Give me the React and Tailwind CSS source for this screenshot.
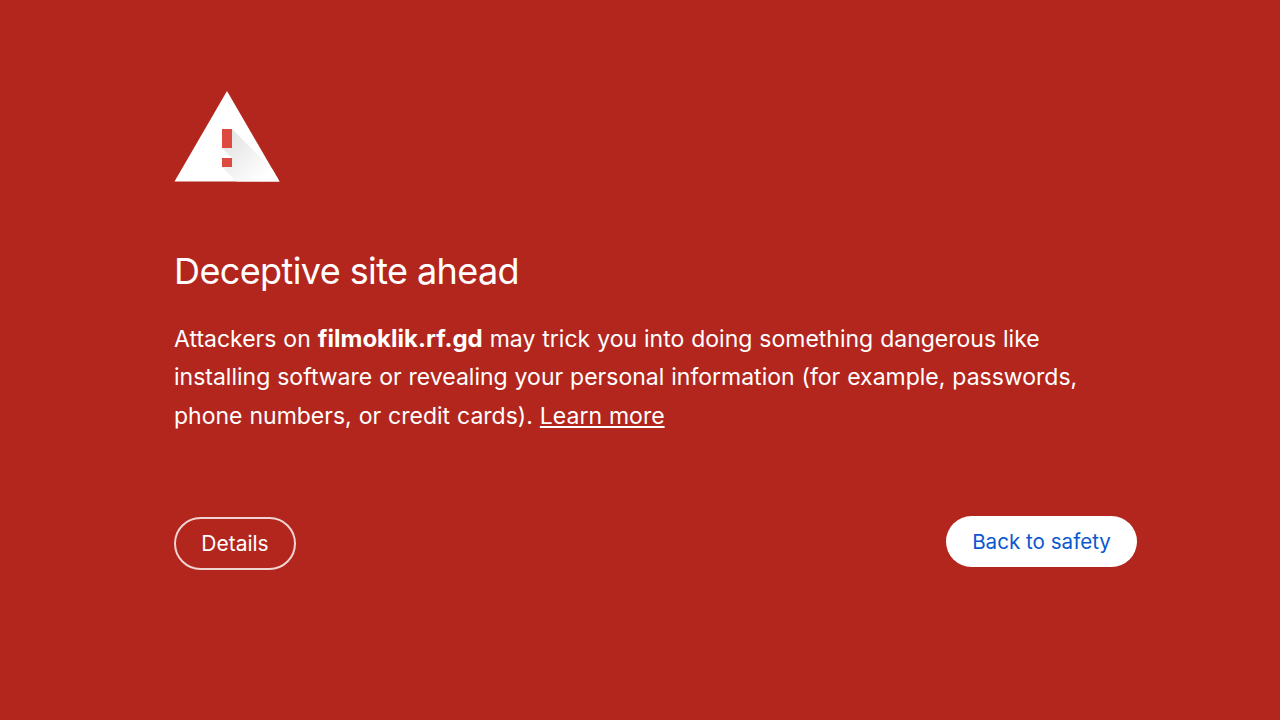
export default function App() {
  return (
    <div className="min-h-screen bg-[#b3261e] text-white font-['Inter',sans-serif] pl-[174px] pt-[90px]">
      <div className="w-[963px]">
        <svg width="106" height="92" viewBox="0 0 106 92" className="block">
          <defs>
            <linearGradient id="shade" gradientUnits="userSpaceOnUse" x1="52" y1="50" x2="90" y2="88">
              <stop offset="0" stopColor="#e4e4e4" />
              <stop offset="1" stopColor="#ffffff" />
            </linearGradient>
          </defs>
          <polygon points="53,1 105.5,91.5 0.5,91.5" fill="#ffffff" />
          <polygon points="58,39 98.6,79.6 105.5,91.5 81.5,91.5 48,58" fill="url(#shade)" />
          <polygon points="48,77 62.5,91.5 81.5,91.5 58,68" fill="url(#shade)" />
          <rect x="48" y="39" width="10" height="19" fill="#dd4b40" />
          <rect x="48" y="68" width="10" height="9" fill="#dd4b40" />
        </svg>
        <h1 className="mt-[64px] text-[36px] leading-[50px] font-normal tracking-[-0.6px]">Deceptive site ahead</h1>
        <p className="mt-[24px] text-[23px] leading-[38.4px] [word-spacing:0.5px]">
          Attackers on <strong className="text-[24px] font-bold">filmoklik.rf.gd</strong> may trick you into doing something dangerous like installing software or revealing your personal information (for example, passwords, phone numbers, or credit cards). <a className="underline">Learn more</a>
        </p>
        <div className="mt-[81px] flex items-start justify-between">
          <button className="mt-px h-[53px] w-[122px] rounded-full border-2 border-white/80 pt-px text-[21px]">Details</button>
          <button className="h-[51px] w-[191px] rounded-full bg-white pt-px text-[20.6px] text-[#0b57d0]">Back to safety</button>
        </div>
      </div>
    </div>
  );
}
